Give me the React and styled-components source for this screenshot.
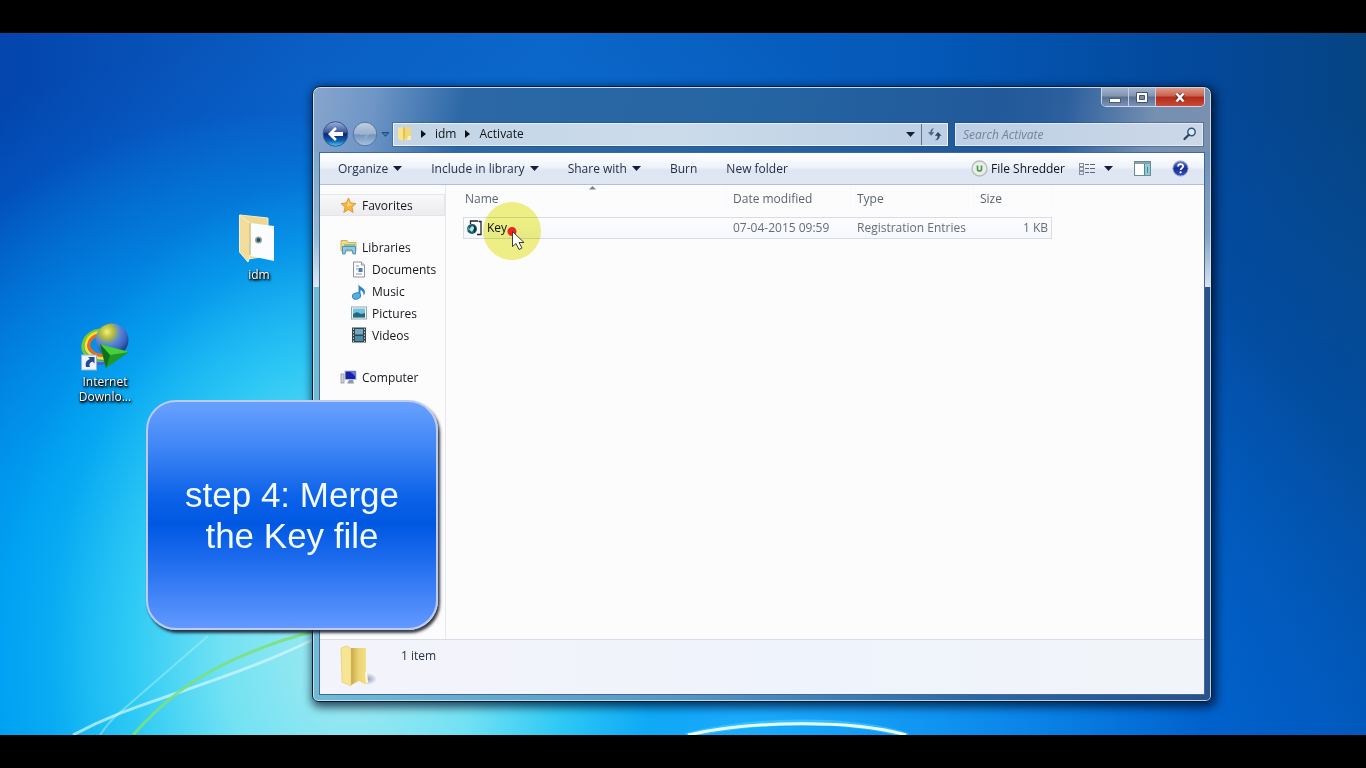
import React from "react";
import styled, { createGlobalStyle } from "styled-components";

const GlobalStyle = createGlobalStyle`
  *, *::before, *::after { box-sizing: border-box; }
  body {
    margin: 0;
    background: #000;
    font-family: "Open Sans", "Noto Sans", sans-serif;
    font-size: 12px;
    color: #16181d;
  }
  button {
    margin: 0;
    padding: 0;
    border: 0;
    background: none;
    font: inherit;
    color: inherit;
  }
`;

const Screen = styled.div`
  display: flex;
  flex-direction: column;
  min-height: 100vh;
  padding: 33px 0;
  background: #000;
`;

const Desktop = styled.main`
  position: relative;
  flex: 1;
  overflow: hidden;
  background:
    radial-gradient(ellipse 350px 480px at 350px 620px, rgba(165, 234, 240, 1) 0%, rgba(120, 228, 243, 0.95) 36%, rgba(60, 212, 245, 0.75) 62%, rgba(20, 180, 240, 0.3) 86%, rgba(10, 160, 240, 0) 100%),
    radial-gradient(ellipse 480px 560px at 260px 640px, rgba(20, 190, 245, 1) 0%, rgba(0, 170, 246, 0.85) 55%, rgba(0, 130, 232, 0) 100%),
    radial-gradient(ellipse 460px 200px at 740px 700px, rgba(30, 180, 255, 0.9) 0%, rgba(0, 130, 245, 0) 100%),
    radial-gradient(ellipse 960px 720px at 460px 700px, rgba(0, 124, 240, 0.95) 0%, rgba(0, 116, 232, 0.85) 50%, rgba(0, 100, 215, 0) 100%),
    linear-gradient(180deg, rgba(0, 96, 210, 0) 10%, rgba(0, 90, 196, 0.8) 100%),
    linear-gradient(90deg, #0345ad 0%, #0b5cc0 22%, #0c66c6 40%, #0458b8 68%, #03489a 88%, #064482 100%);
`;

const Wallpaper = styled.svg`
  position: absolute;
  inset: 0;
  width: 100%;
  height: 100%;
`;

const Shortcut = styled.button`
  position: absolute;
  left: ${(p) => p.$x}px;
  top: ${(p) => p.$y}px;
  width: 70px;
  display: flex;
  flex-direction: column;
  align-items: center;
  gap: 2px;
  color: #fff;
  line-height: 15px;
  text-align: center;
  text-shadow: 1px 1px 2px #000, 0 1px 2px #000, 1px 2px 3px rgba(0, 0, 0, 0.8);
`;

const Window = styled.section`
  position: absolute;
  left: 312px;
  right: 154px;
  top: 53px;
  bottom: 33px;
  display: flex;
  flex-direction: column;
  padding: 0 6px;
  border: 1px solid #0a1c30;
  border-radius: 8px 8px 6px 6px;
  background:
    linear-gradient(180deg, rgba(130, 160, 196, 0.75) 60px, rgba(160, 185, 212, 0.8) 150px, rgba(225, 236, 246, 0.95) 200px, rgba(60, 110, 160, 0) 200px) 0 0 / 100% 100% no-repeat,
    linear-gradient(90deg, #70bbd6 0%, #5698c4 40%, #2b66a4 75%, #27528c 100%);
  padding-bottom: 6px;
  box-shadow:
    inset 0 0 0 1px rgba(205, 232, 246, 0.85),
    2px 3px 10px 2px rgba(0, 12, 40, 0.75);
`;

const Caption = styled.header`
  display: flex;
  flex-direction: column;
  gap: 14px;
  margin: 1px 0 0;
  padding-bottom: 5px;
`;

const TitleFill = styled.div`
  position: absolute;
  inset: 1px 1px auto;
  height: 64px;
  border-radius: 7px 7px 0 0;
  background: linear-gradient(100deg, #87a5cd 0, #6f96c6 60px, #2c68a6 150px, #2564a2 50%, #21599a 680px, #2c5f9e calc(100% - 150px), #7690b2 calc(100% - 60px), #7a90ae 100%);
`;

const WindowControls = styled.div`
  position: relative;
  align-self: flex-end;
  display: flex;
  height: 19px;
  border: 1px solid rgba(214, 226, 240, 0.9);
  border-top: 0;
  border-radius: 0 0 5px 5px;
  overflow: hidden;
`;

const ControlButton = styled.button`
  display: flex;
  align-items: center;
  justify-content: center;
  width: ${(p) => (p.$close ? 48 : 27)}px;
  border-right: ${(p) => (p.$close ? 0 : 1)}px solid #c3cfdf;
  background: ${(p) =>
    p.$close
      ? "linear-gradient(180deg, #dd9a8c 0%, #c9604e 45%, #b02a18 50%, #cc4a36 100%)"
      : "linear-gradient(180deg, #a3b4ca 0%, #8194b0 45%, #586f92 50%, #7d93b3 100%)"};
`;

const NavRow = styled.div`
  position: relative;
  display: flex;
  align-items: center;
  height: 26px;
  padding: 0 2px 0 3px;
`;

const NavButton = styled.button`
  display: flex;
  margin-right: 3px;
`;

const AddressBar = styled.nav`
  flex: 1;
  display: flex;
  align-items: center;
  height: 23px;
  padding-left: 3px;
  border: 1px solid #eaf1f8;
  outline: 1px solid rgba(30, 66, 110, 0.35);
  background: linear-gradient(90deg, #c3d4e6, #cbdbea 50%, #bccfe4);
`;

const Crumb = styled.button`
  display: flex;
  align-items: center;
  gap: 9px;
  margin-left: 9px;
  line-height: 20px;
  color: #101418;
`;

const AddressEnd = styled.div`
  display: flex;
  align-items: center;
  height: 100%;
  margin-left: auto;
`;

const HistoryButton = styled.button`
  display: flex;
  align-items: center;
  height: 100%;
`;

const RefreshButton = styled.button`
  display: flex;
  align-items: center;
  justify-content: center;
  width: 26px;
  height: 100%;
  margin-left: 6px;
  border-left: 1px solid #5d7594;
`;

const SearchBox = styled.label`
  display: flex;
  align-items: center;
  flex: 0 1 248px;
  height: 23px;
  margin-left: 7px;
  padding: 0 5px 0 7px;
  border: 1px solid #e2eaf3;
  outline: 1px solid rgba(30, 66, 110, 0.35);
  background: linear-gradient(90deg, #bccfe4, #ccd8e8);
`;

const SearchInput = styled.input`
  flex: 1;
  min-width: 0;
  padding: 0;
  border: 0;
  outline: 0;
  background: transparent;
  font: italic 12px "Open Sans", "Noto Sans", sans-serif;
  color: #333;
  &::placeholder { color: #74839a; opacity: 1; }
`;

const Frame = styled.div`
  position: relative;
  flex: 1;
  display: flex;
  flex-direction: column;
  min-height: 0;
  border: 1px solid #44688f;
  background: #fcfcfd;
`;

const Toolbar = styled.div`
  display: flex;
  align-items: center;
  gap: 29px;
  height: 32px;
  padding: 0 15px 0 18px;
  border-bottom: 1px solid #b3bfd2;
  background: linear-gradient(180deg, #fdfeff 0%, #eff3fa 45%, #dfe6f3 55%, #e0e7f4 100%);
  color: #1f2c44;
`;

const ToolButton = styled.button`
  display: flex;
  align-items: center;
  gap: ${(p) => p.$gap || 5}px;
  white-space: nowrap;
`;

const ToolbarEnd = styled.div`
  display: flex;
  align-items: center;
  gap: 14px;
  margin-left: auto;
  color: #10141c;
`;

const ViewTools = styled.div`
  display: flex;
  align-items: center;
  gap: 21px;
`;

const Panes = styled.div`
  flex: 1;
  display: flex;
  min-height: 0;
`;

const Sidebar = styled.nav`
  width: 126px;
  flex: none;
  display: flex;
  flex-direction: column;
  gap: 20px;
  padding-top: 9px;
  border-right: 1px solid #e6e8f0;
`;

const TreeGroup = styled.div`
  display: flex;
  flex-direction: column;
`;

const TreeItem = styled.button`
  display: flex;
  align-items: center;
  gap: 5px;
  height: 22px;
  padding-left: ${(p) => (p.$child ? 31 : 20)}px;
  border: 1px solid ${(p) => (p.$selected ? "#e4e5e9" : "transparent")};
  border-left: 0;
  background: ${(p) => (p.$selected ? "linear-gradient(180deg, #f8f8f9, #ececef)" : "none")};
  white-space: nowrap;
`;

const FilePane = styled.div`
  flex: 1;
  min-width: 0;
  padding: 0 0 0 17px;
`;

const FileTable = styled.table`
  width: 589px;
  table-layout: fixed;
  border-collapse: separate;
  border-spacing: 0;
`;

const HeadCell = styled.th`
  position: relative;
  width: ${(p) => p.$w}px;
  height: 26px;
  padding: 0 0 0 ${(p) => (p.$first ? 2 : 6)}px;
  border-right: 1px solid #f8f9fb;
  font-weight: 400;
  text-align: left;
  color: #5d6470;
`;

const SortMark = styled.svg`
  position: absolute;
  left: 126px;
  top: 0;
`;

const Spacer = styled.tr`
  height: 6px;
`;

const Cell = styled.td`
  height: 22px;
  padding: 0 ${(p) => (p.$right ? 3 : 0)}px 0 ${(p) => (p.$first ? 2 : 6)}px;
  border: solid #d9dce2;
  border-width: 1px ${(p) => (p.$right ? 1 : 0)}px 1px ${(p) => (p.$first ? 1 : 0)}px;
  background: linear-gradient(180deg, #fdfdfe, #f5f7fc);
  line-height: 18px;
  text-align: ${(p) => (p.$right ? "right" : "left")};
  white-space: nowrap;
  color: ${(p) => (p.$first ? "#111" : "#666d78")};
`;

const FileName = styled.span`
  display: flex;
  align-items: center;
  gap: 4px;
`;

const Details = styled.footer`
  display: flex;
  align-items: flex-start;
  gap: 24px;
  height: 55px;
  padding: 4px 0 0 19px;
  border-top: 1px solid #d9dce6;
  background: linear-gradient(90deg, #f3f3fb, #eff3fb 60%, #f1f4f8);
  color: #2b3546;
`;

const ItemCount = styled.span`
  padding-top: 3px;
  line-height: 18px;
`;

const Callout = styled.aside`
  position: absolute;
  left: 146px;
  top: 367px;
  width: 292px;
  height: 230px;
  display: flex;
  align-items: center;
  justify-content: center;
  border: 2px solid #bccbee;
  border-radius: 30px;
  background: linear-gradient(180deg, #68a0ff 0%, #3f86f6 20%, #0c62e8 42%, #0058e2 54%, #1e6cee 70%, #6299ff 100%);
  box-shadow: 2px 3px 3px rgba(20, 24, 40, 0.85);
  color: #f2fbff;
  font: 35px/41px "Liberation Sans", Arial, sans-serif;
  text-align: center;
`;

const ClickHalo = styled.div`
  position: absolute;
  left: 483px;
  top: 169px;
  width: 58px;
  height: 58px;
  border-radius: 50%;
  background: #f0f285;
  mix-blend-mode: multiply;
  pointer-events: none;
`;

const Pointer = styled.svg`
  position: absolute;
  left: 482px;
  top: 168px;
  pointer-events: none;
`;

const Caret = () => (
  <svg width="9" height="5" viewBox="0 0 9 5" aria-hidden="true">
    <path d="M0 0h9L4.500 5z" fill="#14203a" />
  </svg>
);

const CrumbArrow = () => (
  <svg width="5" height="8" viewBox="0 0 5 8" aria-hidden="true">
    <path d="M0 0l5 4-5 4z" fill="#0b0f16" />
  </svg>
);

const BackIcon = () => (
  <svg width="27" height="26" viewBox="0 0 27 26" aria-hidden="true">
    <defs>
      <linearGradient id="back" x1="0" y1="0" x2="0" y2="1">
        <stop offset="0" stopColor="#9fb4dc" />
        <stop offset=".42" stopColor="#40579c" />
        <stop offset=".5" stopColor="#0b2372" />
        <stop offset=".78" stopColor="#0f62b4" />
        <stop offset="1" stopColor="#4fd2f4" />
      </linearGradient>
    </defs>
    <circle cx="13.500" cy="13" r="12.300" fill="url(#back)" stroke="#33588e" />
    <path d="M13 6L6 13l7 7 1.800-1.900-3-3.200H21v-3.800h-9.200l3-3.200z" fill="#fff" />
  </svg>
);

const ForwardIcon = () => (
  <svg width="26" height="26" viewBox="0 0 26 26" aria-hidden="true">
    <defs>
      <linearGradient id="fwd" x1="0" y1="0" x2="0" y2="1">
        <stop offset="0" stopColor="#c1cfe2" />
        <stop offset=".48" stopColor="#9db2ce" />
        <stop offset=".54" stopColor="#7393bb" />
        <stop offset="1" stopColor="#a9c4e0" />
      </linearGradient>
    </defs>
    <circle cx="13" cy="13" r="11.800" fill="url(#fwd)" stroke="#56749e" />
    <path d="M13 8l5 5-5 5-1.200-1.200 2.700-2.800H8v-2h6.500l-2.700-2.800z" fill="#a3b8d2" opacity=".5" />
  </svg>
);

const HistoryIcon = () => (
  <svg width="9" height="7" viewBox="0 0 9 7" aria-hidden="true">
    <path d="M1 1.500h7L4.500 5.500z" fill="#3c78b8" stroke="#1f4d86" />
  </svg>
);

const SmallFolder = () => (
  <svg width="15" height="16" viewBox="0 0 15 16" aria-hidden="true">
    <path d="M1 2l5-1v14l-5-2z" fill="#f8e48c" />
    <path d="M6 1l3 1v10l-3 3z" fill="#e3c252" />
    <path d="M8 1h6v13H6l2-3z" fill="#f0d878" />
    <path d="M11 10h3v4h-4z" fill="#fbeeb0" />
  </svg>
);

const RefreshIcon = () => (
  <svg width="15" height="14" viewBox="0 0 15 14" aria-hidden="true">
    <path d="M7.500 1C5 1.200 3.300 2.800 3.300 5.200H1l3.200 3.600 3-3.600H5.200C5.200 3.400 6 2 7.500 1z" fill="#4a6887" />
    <path d="M8 13.500c3-.4 4.800-2.200 4.800-4.700h1.700L11 5 7.800 8.800h2.800c0 2-.8 3.500-2.600 4.700z" fill="#2f4866" />
  </svg>
);

const SearchIcon = () => (
  <svg width="14" height="14" viewBox="0 0 14 14" aria-hidden="true">
    <circle cx="8.500" cy="5" r="3.700" fill="#dceaf6" stroke="#2d5b83" strokeWidth="1.500" />
    <path d="M5.800 7.800L1.500 12" stroke="#2b4562" strokeWidth="2.200" strokeLinecap="round" />
  </svg>
);

const ShredderIcon = () => (
  <svg width="17" height="17" viewBox="0 0 17 17" aria-hidden="true">
    <circle cx="8.500" cy="8.500" r="7.500" fill="#e9eeea" stroke="#b5bdb8" strokeWidth="1.300" />
    <path d="M6.500 5.500V9a2 2 0 004 0V5.500" fill="none" stroke="#4c9a52" strokeWidth="1.700" />
  </svg>
);

const ViewIcon = () => (
  <svg width="16" height="14" viewBox="0 0 16 14" aria-hidden="true" fill="none">
    {[1, 5, 9].map((y) => (
      <g key={y}>
        <rect x=".5" y={y + 0.5} width="4" height="3" stroke="#8b9099" />
        <path d={`M6 ${y + 1.5}h4M11 ${y + 1.5}h5`} stroke="#5a6880" />
      </g>
    ))}
  </svg>
);

const PreviewIcon = () => (
  <svg width="17" height="15" viewBox="0 0 17 15" aria-hidden="true">
    <rect x=".5" y=".5" width="16" height="14" fill="#fff" stroke="#6d8c92" />
    <path d="M1 2h15" stroke="#84a2a8" strokeWidth="2" />
    <rect x="10" y="3" width="6" height="11" fill="#8fcbd8" />
    <path d="M10.500 3v11M13.500 6v6" stroke="#4b8796" />
  </svg>
);

const HelpIcon = () => (
  <svg width="17" height="17" viewBox="0 0 17 17" aria-hidden="true">
    <defs>
      <linearGradient id="help" x1="0" y1="0" x2="0" y2="1">
        <stop offset="0" stopColor="#6c80d0" />
        <stop offset=".5" stopColor="#1a2c94" />
        <stop offset="1" stopColor="#3657bc" />
      </linearGradient>
    </defs>
    <circle cx="8.500" cy="8.500" r="7.600" fill="url(#help)" stroke="#9ba8cc" />
    <path d="M6 6.600c0-3.400 5.200-3.200 5.200-.3 0 1.900-2.600 1.900-2.600 3.700" fill="none" stroke="#fff" strokeWidth="1.700" />
    <circle cx="8.600" cy="12.300" r="1.100" fill="#fff" />
  </svg>
);

const StarIcon = () => (
  <svg width="17" height="17" viewBox="0 0 17 17" aria-hidden="true">
    <path d="M8.500 1l2.100 5 5.400.5-4.100 3.600 1.300 5.300-4.700-2.900-4.700 2.900 1.300-5.300L1 6.500 6.400 6z" fill="#fbb63a" stroke="#d99a3c" />
    <path d="M8.500 3.500l1.300 3.600 3 .4-5.800 2z" fill="#ffe08a" />
  </svg>
);

const LibrariesIcon = () => (
  <svg width="17" height="16" viewBox="0 0 17 16" aria-hidden="true">
    <path d="M1 1.500h6l1 2h8V12H1z" fill="#efd989" stroke="#cdb260" />
    <rect x="4" y="5" width="11" height="3" fill="#8fc488" />
    <path d="M2.500 7.500h13V15h-2.500l-1-4H6l-1 4H2.500z" fill="#8ec7e2" stroke="#4f93b8" />
  </svg>
);

const DocumentIcon = () => (
  <svg width="16" height="17" viewBox="0 0 16 17" aria-hidden="true">
    <path d="M2.500 1h8l3 3v12h-11z" fill="#fbfcfd" stroke="#8b95a1" />
    <path d="M10.500 1v3h3" fill="#dde3ea" stroke="#8b95a1" />
    <path d="M5 5h3M5 8h2M5 13h6" stroke="#8797ab" />
    <rect x="7.500" y="7" width="4" height="4" fill="#4f7ca8" />
  </svg>
);

const MusicIcon = () => (
  <svg width="16" height="17" viewBox="0 0 16 17" aria-hidden="true">
    <path d="M7.500 .5c0 3.500 6.500 4 6.500 8.500 0 1.300-.5 2.500-1.400 3.400.2-3-1.500-4.600-3.100-5.300V13h-2z" fill="#2f86c2" />
    <ellipse cx="5.500" cy="13" rx="4.300" ry="3.200" transform="rotate(-15 5.500 13)" fill="#54aee0" stroke="#2b7bb6" strokeWidth=".8" />
  </svg>
);

const PictureIcon = () => (
  <svg width="16" height="14" viewBox="0 0 16 14" aria-hidden="true">
    <rect x=".5" y="1" width="15" height="12" fill="#f4f8fa" stroke="#93a6b2" />
    <rect x="2" y="2.500" width="12" height="9" fill="#74c2dc" />
    <path d="M2 8l4-2 4 2 4-1v4.500H2z" fill="#226b7c" />
  </svg>
);

const VideoIcon = () => (
  <svg width="16" height="16" viewBox="0 0 16 16" aria-hidden="true">
    <rect x="1" y=".5" width="14" height="15" fill="#35454f" />
    <rect x="4" y="2" width="8" height="5.500" fill="#6fa9c4" />
    <rect x="4" y="9" width="8" height="5" fill="#4f8aa6" />
    <path d="M2.500 1.500v14M13.500 1.500v14" stroke="#bcc8cf" strokeDasharray="1.500 1.500" />
  </svg>
);

const ComputerIcon = () => (
  <svg width="17" height="16" viewBox="0 0 17 16" aria-hidden="true">
    <rect x="1" y="5" width="3" height="9" fill="#cfd5dc" stroke="#7f8a96" strokeWidth=".7" />
    <rect x="4.500" y="1.500" width="12" height="9.500" fill="#b9c2d4" />
    <rect x="5.500" y="2.500" width="10" height="7.500" fill="#1722a8" />
    <path d="M10 2.500h5.500v5z" fill="#5f77e0" />
    <path d="M9 11h4l1 3.500H7z" fill="#8d98a8" />
  </svg>
);

const KeyFileIcon = () => (
  <svg width="17" height="16" viewBox="0 0 17 16" aria-hidden="true">
    <path d="M4.500 5V1h8.500l2.500 2.500V15H9" fill="#fff" />
    <path d="M4.500 4V1H12M12.500 1.500h2.500V14.500h-4" fill="none" stroke="#1d262c" strokeWidth="1.300" />
    <circle cx="6" cy="9" r="5" fill="#1d5c6a" />
    <path d="M3 9.500l3-3.500 2.500 1.500L6 12z" fill="#b7e2e6" />
    <path d="M8 4l2 5-2 4z" fill="#0d2c38" />
    <path d="M1 11.500l2-4" stroke="#6cb2bd" />
  </svg>
);

const OpenFolderIcon = () => (
  <svg width="38" height="46" viewBox="0 0 38 46" aria-hidden="true">
    <defs>
      <linearGradient id="fold" x1="0" y1="0" x2="1" y2="0">
        <stop offset="0" stopColor="#c9a848" />
        <stop offset=".45" stopColor="#ecd474" />
        <stop offset="1" stopColor="#f4e08a" />
      </linearGradient>
      <radialGradient id="foldShadow">
        <stop offset="0" stopColor="#9aa2b8" />
        <stop offset="1" stopColor="#9aa2b8" stopOpacity="0" />
      </radialGradient>
    </defs>
    <ellipse cx="29" cy="35" rx="9" ry="6" fill="url(#foldShadow)" />
    <path d="M12 4h15v25l2 10-3 1-6-3-8 4z" fill="url(#fold)" />
    <path d="M2 4l6-2c3 1 4 3 4 6v34l-9-4z" fill="#f6e694" stroke="#e2c860" strokeWidth=".6" />
    <path d="M26 28l2 1 1 9-2 1z" fill="#fffbe0" />
  </svg>
);

const DesktopFolderIcon = () => (
  <svg width="46" height="52" viewBox="0 0 46 52" aria-hidden="true">
    <path d="M4 2l28 3v38L12 46z" fill="#ecd795" stroke="#f6ebc2" />
    <path d="M14 10l24 3v35l-24-5z" fill="#fbfcfd" />
    <circle cx="22.500" cy="27" r="3.500" fill="#93a6a8" />
    <circle cx="22.500" cy="27" r="2" fill="#314e58" />
    <path d="M3.500 2L14 10v33l-2 6-8.500-10z" fill="#f2dd9c" stroke="#fbf2cf" />
    <path d="M14 10v32" stroke="#bda565" />
  </svg>
);

const IdmIcon = () => (
  <svg width="50" height="50" viewBox="0 0 50 50" aria-hidden="true">
    <defs>
      <radialGradient id="globe" cx=".35" cy=".25" r=".8">
        <stop offset="0" stopColor="#f6f07a" />
        <stop offset=".25" stopColor="#b4bc3a" />
        <stop offset=".48" stopColor="#5c88d4" />
        <stop offset=".75" stopColor="#3a64c0" />
        <stop offset="1" stopColor="#16306e" />
      </radialGradient>
    </defs>
    <g fill="none" strokeWidth="3">
      <path d="M20 8C4 10-2 26 7 34c5 5 12 7 20 6" stroke="#7ccb2c" />
      <path d="M19 10.500C7 12 2.500 25 9 31c5 5 11 6 18 5" stroke="#f6e32f" />
      <path d="M18 13c-9 2-12 12-6 16 4 4 9 5 15 4" stroke="#ec6a24" />
      <path d="M10 38c5 4 10 4 16 3" stroke="#4762d8" />
    </g>
    <circle cx="32" cy="18" r="16.500" fill="url(#globe)" />
    <path d="M20 22l29 8-23 16z" fill="#1f9a25" />
    <path d="M20 22l29 8-19 3z" fill="#45cf3c" />
    <path d="M20 22l10 11-4 13z" fill="#0d6f1a" />
    <rect x="1.500" y="33" width="15" height="15" fill="#eef4fb" stroke="#9fb1c8" />
    <path d="M6 45c-1-5 1-7 4-8l-2-2h6.500v6.500L12.500 39.500c-3 1-3.500 3-2.500 5.500z" fill="#214a94" />
  </svg>
);

function WindowTitle() {
  return (
    <Caption>
      <TitleFill />
      <WindowControls>
        <ControlButton aria-label="Minimize">
          <svg width="12" height="14" viewBox="0 0 12 14">
            <rect x=".5" y="8.500" width="11" height="4" fill="#fff" stroke="#4d5f7a" />
          </svg>
        </ControlButton>
        <ControlButton aria-label="Maximize">
          <svg width="12" height="11" viewBox="0 0 12 11">
            <path d="M.5.5h11v10H.5z" fill="#fff" stroke="#42546f" />
            <path d="M3.500 3.500h5v4h-5z" fill="#7b8dab" stroke="#42546f" />
          </svg>
        </ControlButton>
        <ControlButton $close aria-label="Close">
          <svg width="12" height="11" viewBox="0 0 12 11">
            <path d="M2.500 2l7 7M9.500 2l-7 7" stroke="#6d2a22" strokeWidth="4" />
            <path d="M2.500 1.500l7 8M9.500 1.500l-7 8" stroke="#fff" strokeWidth="2.500" />
          </svg>
        </ControlButton>
      </WindowControls>
      <NavRow>
        <NavButton aria-label="Back"><BackIcon /></NavButton>
        <NavButton aria-label="Forward"><ForwardIcon /></NavButton>
        <NavButton aria-label="Recent pages"><HistoryIcon /></NavButton>
        <AddressBar aria-label="Address">
          <SmallFolder />
          <Crumb><CrumbArrow />idm</Crumb>
          <Crumb><CrumbArrow />Activate</Crumb>
          <AddressEnd>
            <HistoryButton aria-label="Previous locations"><Caret /></HistoryButton>
            <RefreshButton aria-label="Refresh"><RefreshIcon /></RefreshButton>
          </AddressEnd>
        </AddressBar>
        <SearchBox>
          <SearchInput placeholder="Search Activate" aria-label="Search Activate" />
          <SearchIcon />
        </SearchBox>
      </NavRow>
    </Caption>
  );
}

function CommandBar() {
  return (
    <Toolbar>
      <ToolButton>Organize<Caret /></ToolButton>
      <ToolButton>Include in library<Caret /></ToolButton>
      <ToolButton>Share with<Caret /></ToolButton>
      <ToolButton>Burn</ToolButton>
      <ToolButton>New folder</ToolButton>
      <ToolbarEnd>
        <ToolButton $gap={3}><ShredderIcon />File Shredder</ToolButton>
        <ViewTools>
          <ToolButton $gap={9} aria-label="Change view"><ViewIcon /><Caret /></ToolButton>
          <ToolButton aria-label="Show preview pane"><PreviewIcon /></ToolButton>
          <ToolButton aria-label="Help"><HelpIcon /></ToolButton>
        </ViewTools>
      </ToolbarEnd>
    </Toolbar>
  );
}

const libraryItems = [
  { name: "Documents", Icon: DocumentIcon },
  { name: "Music", Icon: MusicIcon },
  { name: "Pictures", Icon: PictureIcon },
  { name: "Videos", Icon: VideoIcon },
];

const columns = [
  { name: "Name", width: 264 },
  { name: "Date modified", width: 124 },
  { name: "Type", width: 123 },
  { name: "Size", width: 78 },
];

export default function App() {
  return (
    <Screen>
      <GlobalStyle />
      <Desktop>
        <Wallpaper viewBox="0 0 1366 702" preserveAspectRatio="none" fill="none" aria-hidden="true">
          <path d="M100 702Q108 690 118 681L208 603" stroke="#a8f0fb" strokeWidth="2" opacity=".5" />
          <path d="M73 702C110 682 140 673 180 659S270 628 312 607" stroke="#d2f8fc" strokeWidth="3" opacity=".7" />
          <path d="M133 702C160 672 190 646 233 627S290 605 316 598" stroke="#7ce07c" strokeWidth="3" opacity=".9" />
          <path d="M686 703C750 686 850 684 908 703" stroke="#5fe0ff" strokeWidth="6" opacity=".4" />
          <path d="M688 702C750 688 850 686 906 702" stroke="#e6fffb" strokeWidth="3" />
        </Wallpaper>

        <Shortcut $x={224} $y={180}>
          <DesktopFolderIcon />
          idm
        </Shortcut>
        <Shortcut $x={70} $y={289}>
          <IdmIcon />
          <span>Internet<br />Downlo...</span>
        </Shortcut>

        <Window aria-label="Activate">
          <WindowTitle />
          <Frame>
            <CommandBar />
            <Panes>
              <Sidebar aria-label="Navigation">
                <TreeItem $selected><StarIcon />Favorites</TreeItem>
                <TreeGroup>
                  <TreeItem><LibrariesIcon />Libraries</TreeItem>
                  {libraryItems.map(({ name, Icon }) => (
                    <TreeItem $child key={name}><Icon />{name}</TreeItem>
                  ))}
                </TreeGroup>
                <TreeItem><ComputerIcon />Computer</TreeItem>
              </Sidebar>
              <FilePane>
                <FileTable>
                  <thead>
                    <tr>
                      {columns.map((c, i) => (
                        <HeadCell key={c.name} $w={c.width} $first={i === 0}>
                          {c.name}
                          {i === 0 && (
                            <SortMark width="7" height="5" viewBox="0 0 7 5">
                              <path d="M0 4.500L3.500 1 7 4.500z" fill="#76838f" />
                            </SortMark>
                          )}
                        </HeadCell>
                      ))}
                    </tr>
                  </thead>
                  <tbody>
                    <Spacer aria-hidden="true" />
                    <tr>
                      <Cell $first><FileName><KeyFileIcon />Key</FileName></Cell>
                      <Cell>07-04-2015 09:59</Cell>
                      <Cell>Registration Entries</Cell>
                      <Cell $right>1 KB</Cell>
                    </tr>
                  </tbody>
                </FileTable>
              </FilePane>
            </Panes>
            <Details>
              <OpenFolderIcon />
              <ItemCount>1 item</ItemCount>
            </Details>
          </Frame>
        </Window>

        <ClickHalo />
        <Pointer width="60" height="60" viewBox="0 0 60 60" aria-hidden="true">
          <circle cx="30" cy="30.500" r="4.500" fill="#f02418" />
          <path d="M30.500 30.500v15l3.500-3 3 6 3-1.500-3-5.500h5z" fill="#fff" stroke="#3a3a3a" strokeWidth="1" />
        </Pointer>

        <Callout>step 4: Merge<br />the Key file</Callout>
      </Desktop>
    </Screen>
  );
}
